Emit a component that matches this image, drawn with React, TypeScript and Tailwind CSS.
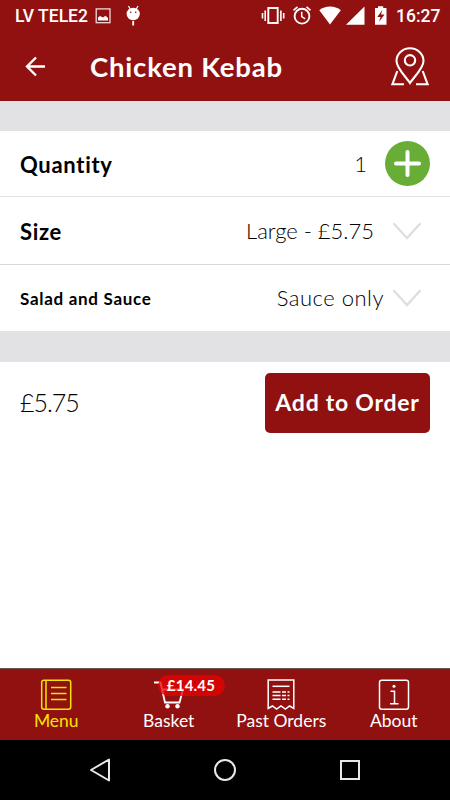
import React from "react";
import clsx from "clsx";

const BasketIcon = () => (
  <svg width="34" height="32" viewBox="0 0 34 32" fill="none" stroke="white" strokeWidth="1.800">
    <path d="M2 3.500h6.500l4.500 20h14.500L31 10.500H9.500" />
    <circle cx="15.500" cy="27.300" r="2.200" fill="white" stroke="none" />
    <circle cx="25.500" cy="27.300" r="2.200" fill="white" stroke="none" />
  </svg>
);

const MenuIcon = () => (
  <svg width="32" height="32" viewBox="0 0 32 32" fill="none" stroke="currentColor" strokeWidth="1.500">
    <rect x="1.700" y="1.200" width="29" height="29" rx="2.200" />
    <path d="M6 1v29M11 8.500h15.500M11 14.500h15.500M11 20.500h15.500" />
  </svg>
);

const PastOrdersIcon = () => (
  <svg width="32" height="32" viewBox="0 0 32 32" fill="none" stroke="currentColor" strokeWidth="1.500">
    <path d="M3.200 29.500V1h25.600v28.500l-4.200-2.500-4.200 3-4.400-3-4.400 3-4.200-3z" />
    <path d="M7.500 7.300h17" />
    <path d="M7.500 13h8M17 13h4M22.500 13h2M7.500 16.600h8M17 16.600h4M22.500 16.600h2M7.500 20.300h8M17 20.300h4M22.500 20.300h2" />
  </svg>
);

const AboutIcon = () => (
  <svg width="32" height="32" viewBox="0 0 32 32" fill="none" stroke="currentColor" strokeWidth="1.500">
    <rect x="1.500" y="1.200" width="29" height="29" rx="2.200" />
    <path d="M12.500 12.300h4v12.500M12 24.800h8.500" />
    <circle cx="16" cy="7.300" r="1.500" fill="currentColor" stroke="none" />
  </svg>
);

const Chevron = () => (
  <svg width="30" height="18" viewBox="0 0 30 18" fill="none" stroke="#dedede" strokeWidth="2.300">
    <path d="M1.500 1.200 15 16 28.500 1.200" />
  </svg>
);

const StatusBar = () => (
  <div className="flex h-8 items-center pl-[15px] font-['Roboto',sans-serif] text-[17.5px] leading-8 font-medium">
    <span className="w-[79px] whitespace-nowrap">LV TELE2</span>
    <svg width="48" height="32" viewBox="94 0 48 32" fill="none">
      <rect x="96.200" y="8.900" width="13.800" height="13.800" stroke="#f3d8d8" strokeWidth="1.300" />
      <path d="M98 20.500v-3l2-1.500 3 1.500 2.500-1.700 2.500 2.200v2.500z" fill="white" />
      <path d="m128.500 6 1.700 3M138 6l-1.700 3" stroke="white" strokeWidth="1.200" />
      <ellipse cx="133.200" cy="14" rx="6.600" ry="6.200" fill="white" />
      <circle cx="130.700" cy="12.300" r=".8" fill="#911110" />
      <circle cx="135.700" cy="12.300" r=".8" fill="#911110" />
      <path d="M133.200 21v4.500" stroke="white" strokeWidth="1.800" />
    </svg>
    <svg className="ml-auto" width="130" height="32" viewBox="260 0 130 32" fill="none">
      <rect x="268.300" y="8" width="9.400" height="15" stroke="white" strokeWidth="1.900" />
      <path d="M265.200 10.500v10.500M280.900 10.500v10.500M262.500 13v5.500M283.700 13v5.500" stroke="white" strokeWidth="1.600" />
      <circle cx="302" cy="16.200" r="7.400" stroke="white" strokeWidth="1.900" />
      <path d="M301.700 11.800v4.900l3.500 2.100" stroke="white" strokeWidth="1.500" />
      <path d="m293.500 10.300 4-3.400M310.500 10.300l-4-3.400" stroke="white" strokeWidth="1.700" />
      <path d="M319.300 10.300c6-5 15.500-5 21.500 0L330 24.500z" fill="white" />
      <path d="M346 24.700 364.500 6.500v18.200z" fill="white" />
      <path d="M375 8h3V6.200h5.200V8h3.300v16.700H375z" fill="white" />
      <path d="m382.300 10-5 7h3.300l-1.600 5 5.500-7.500H381z" fill="#911110" />
    </svg>
    <span className="ml-[6px] w-[54px] whitespace-nowrap">16:27</span>
  </div>
);

const Header = () => (
  <header className="flex h-[69px] items-center pl-[25px]">
    <svg width="22" height="22" viewBox="0 0 22 22" fill="none" stroke="white" strokeWidth="2.400">
      <path d="M20 10.500H2M11 1.500 2 10.500l9 9" />
    </svg>
    <h1 className="ml-[43px] text-[27.5px] leading-8 font-bold tracking-[0.8px] whitespace-nowrap">Chicken Kebab</h1>
    <svg className="mr-5 ml-auto" width="40" height="42" viewBox="390 46 40 42" fill="none" stroke="white" strokeWidth="2.100">
      <path d="M410 83c-3-5-13.500-14.500-13.500-22a13.500 12.800 0 0 1 27 0c0 7.500-10.500 17-13.500 22z" />
      <circle cx="410" cy="60.300" r="5.200" />
      <path d="M397.300 71 392.400 84.300H404M422.700 71l4.900 13.300H416" />
    </svg>
  </header>
);

interface OptionRowProps {
  label: string;
  labelClass?: string;
  className: string;
  children: React.ReactNode;
}

const OptionRow = ({
  label,
  labelClass = "text-[22px] tracking-[0.7px]",
  className,
  children,
}: OptionRowProps) => (
  <div className={clsx("flex items-center justify-between pl-5", className)}>
    <span className={clsx("pt-px font-bold whitespace-nowrap", labelClass)}>{label}</span>
    <div className="flex items-center text-[22px] font-light whitespace-nowrap">{children}</div>
  </div>
);

const tabs = [
  { label: "Menu", icon: <MenuIcon />, active: true },
  { label: "Basket", icon: <BasketIcon />, badge: "£14.45" },
  { label: "Past Orders", icon: <PastOrdersIcon /> },
  { label: "About", icon: <AboutIcon /> },
];

const TabBar = () => (
  <nav className="grid h-[72px] grid-cols-4 border-t border-[#6b5555] bg-[#911110] text-white">
    {tabs.map((tab) => (
      <button
        key={tab.label}
        className={clsx("relative flex flex-col items-center pt-[10px]", tab.active && "text-[#f5e500]")}
      >
        {tab.icon}
        <span className="mt-px text-[17.5px] leading-[18px] whitespace-nowrap">{tab.label}</span>
        {tab.badge && (
          <span className="absolute top-[6px] left-[45px] flex h-[21px] w-[67px] items-center justify-center rounded-full bg-[#e80000]/75 text-[15px] font-bold tracking-[0.2px]">
            {tab.badge}
          </span>
        )}
      </button>
    ))}
  </nav>
);

const SystemNav = () => (
  <div className="flex h-[60px] items-center justify-center bg-black">
    <svg width="280" height="60" viewBox="85 740 280 60" fill="none" stroke="#e8e8e8" strokeWidth="2">
      <path d="M109 759.500v21L91 770z" strokeLinejoin="round" />
      <circle cx="225" cy="770" r="10" />
      <rect x="341" y="761" width="18" height="18" />
    </svg>
  </div>
);

const App: React.FC = () => {
  return (
    <div className="flex h-[800px] w-[450px] flex-col overflow-hidden bg-white font-['Lato',sans-serif] text-black">
      <div className="bg-[#911110] text-white">
        <StatusBar />
        <Header />
      </div>
      <div className="h-[30px] bg-[#e2e2e4]" />

      <OptionRow label="Quantity" className="h-[66px] border-b border-[#e2e2e4] pr-5">
        <span className="mr-[18px]">1</span>
        <button className="flex size-[45px] items-center justify-center rounded-full bg-[#68ae36]">
          <svg width="27" height="27" viewBox="0 0 27 27" stroke="white" strokeWidth="4" strokeLinecap="round">
            <path d="M13.500 2v23M2 13.500h23" />
          </svg>
        </button>
      </OptionRow>
      <OptionRow label="Size" className="h-[68px] border-b border-[#d8d8d8] pr-7">
        <span className="mr-[18px] pb-px">Large - £5.75</span>
        <Chevron />
      </OptionRow>
      <OptionRow label="Salad and Sauce" labelClass="text-[17px] tracking-[0.7px]" className="h-[66px] pr-7">
        <span className="mr-[8px] pb-[2px] tracking-[0.5px]">Sauce only</span>
        <Chevron />
      </OptionRow>

      <div className="h-[31px] bg-[#e2e2e4]" />
      <div className="flex h-[81px] items-center justify-between px-5">
        <span className="text-[25px] font-light tracking-[-1px]">£5.75</span>
        <button className="h-[60px] w-[165px] rounded-[5px] bg-[#911110] text-[23px] font-bold tracking-[0.75px] whitespace-nowrap text-white">
          Add to Order
        </button>
      </div>
      <main className="flex-1" />

      <TabBar />
      <SystemNav />
    </div>
  );
};

export default App;
